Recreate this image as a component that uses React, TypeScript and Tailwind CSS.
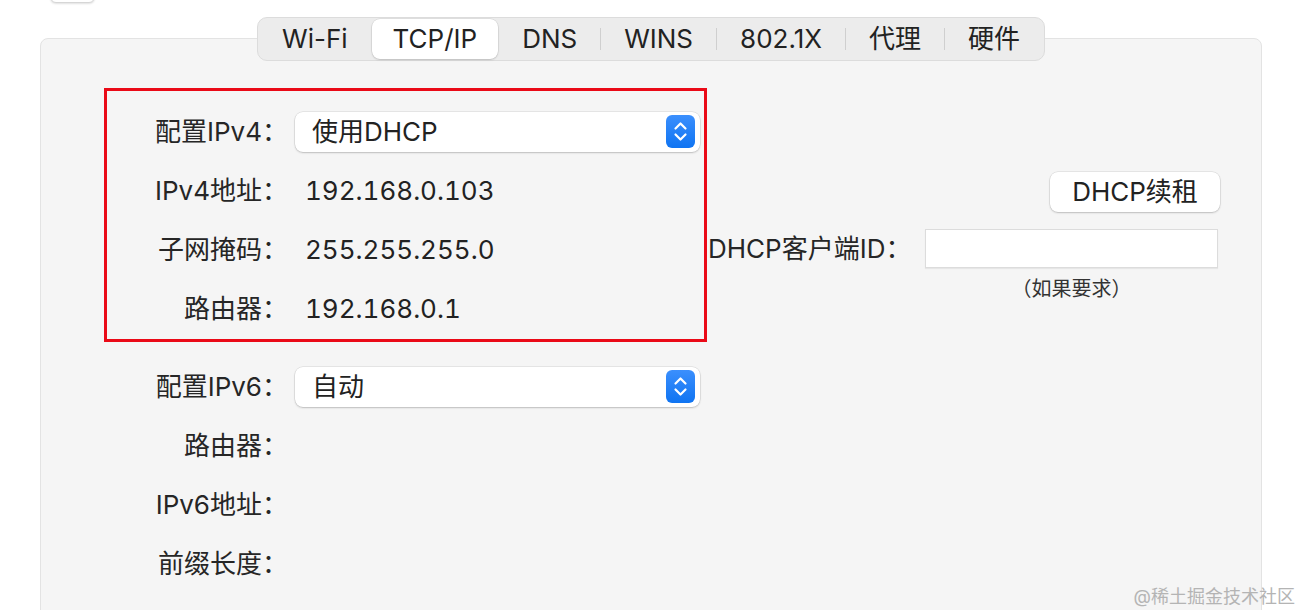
import React from "react";

const tabs = ["Wi-Fi", "TCP/IP", "DNS", "WINS", "802.1X", "代理", "硬件"];
const selected = 1;

function Stepper() {
  return (
    <svg width="29" height="33" viewBox="0 0 29 33" className="shrink-0">
      <defs>
        <linearGradient id="stepg" x1="0" y1="0" x2="0" y2="1">
          <stop offset="0" stopColor="#3b8ffd" />
          <stop offset="1" stopColor="#0f74f2" />
        </linearGradient>
      </defs>
      <rect x="0" y="0" width="29" height="33" rx="6" fill="url(#stepg)" />
      <path d="M9.5 13.5 L14.5 8.5 L19.5 13.5" fill="none" stroke="#fff" strokeWidth="2.2" strokeLinecap="round" strokeLinejoin="round" />
      <path d="M9.5 19.5 L14.5 24.5 L19.5 19.5" fill="none" stroke="#fff" strokeWidth="2.2" strokeLinecap="round" strokeLinejoin="round" />
    </svg>
  );
}

function Select({ value }: { value: string }) {
  return (
    <div className="flex h-[40px] w-[405px] items-center justify-between rounded-[8px] bg-white pl-[17px] pr-[5px] shadow-[0_0_0_0.5px_rgba(0,0,0,0.12),0_1px_2px_rgba(0,0,0,0.18)]">
      <span>{value}</span>
      <Stepper />
    </div>
  );
}

function Row({ label, children }: { label: string; children?: React.ReactNode }) {
  return (
    <div className="flex h-[59px] items-center gap-[7px]">
      <div className="w-[181px] shrink-0 text-right text-[#262626]">{label}</div>
      <div className="flex w-[405px] items-center">{children}</div>
    </div>
  );
}

function Value({ children }: { children: React.ReactNode }) {
  return <span className="pl-[10px] tabular-nums">{children}</span>;
}

export default function App() {
  return (
    <div className="relative h-[610px] w-[1302px] overflow-hidden bg-white font-['Inter','Noto_Sans_CJK_SC',sans-serif] text-[26px] leading-none text-[#222]">
      <div className="-mt-[17px] ml-[50px] h-[20px] w-[45px] rounded-[6px] border border-[#d6d6d6] bg-white shadow-[0_1px_2px_rgba(0,0,0,0.12)]" />
      <div className="mt-[14px] flex flex-col items-center">
        <div className="relative z-10 flex h-[44px] items-center rounded-[10px] border border-[#dcdcdc] bg-[#ececec] p-[1px]">
          {tabs.map((t, i) => (
            <React.Fragment key={t}>
              {i > 0 && (
                <div
                  className={
                    i === selected || i - 1 === selected
                      ? "h-[22px] w-[1px]"
                      : "h-[22px] w-[1px] bg-[#cfcfcf]"
                  }
                />
              )}
              <div
                className={
                  i === selected
                    ? "flex h-[40px] items-center rounded-[8px] bg-white px-[21px] shadow-[0_0_0_0.5px_rgba(0,0,0,0.1),0_1px_2px_rgba(0,0,0,0.15)]"
                    : "flex h-[40px] items-center px-[23px]"
                }
              >
                {t}
              </div>
            </React.Fragment>
          ))}
        </div>
        <div className="-mt-[23px] h-[600px] w-[1222px] rounded-[8px] border border-[#e3e3e3] bg-[#f5f5f5] pl-[63px] pr-[41px] pt-[49px]">
          <div className="flex">
            <div className="h-[254px] w-[603px] shrink-0 border-[3px] border-[#ea0a17] pt-[11px]">
              <Row label="配置IPv4：">
                <Select value="使用DHCP" />
              </Row>
              <Row label="IPv4地址：">
                <Value>192.168.0.103</Value>
              </Row>
              <Row label="子网掩码：">
                <Value>255.255.255.0</Value>
              </Row>
              <Row label="路由器：">
                <Value>192.168.0.1</Value>
              </Row>
            </div>
            <div className="flex flex-1 flex-col">
              <div className="mt-[84px] flex h-[40px] w-[170px] items-center justify-center self-end rounded-[8px] bg-white shadow-[0_0_0_0.5px_rgba(0,0,0,0.12),0_1px_2px_rgba(0,0,0,0.18)]">
                DHCP续租
              </div>
              <div className="mt-[17px] flex items-center justify-between pl-[1px] pr-[2px]">
                <span className="text-[#262626]">DHCP客户端ID：</span>
                <div className="h-[39px] w-[293px] border border-[#dcdcdc] bg-white shadow-[0_1px_1px_rgba(0,0,0,0.06)]" />
              </div>
              <div className="mr-[2px] mt-[11px] w-[293px] self-end text-center text-[20px] text-[#333]">
                （如果要求）
              </div>
            </div>
          </div>
          <div className="mt-[15px] pl-[3px]">
            <Row label="配置IPv6：">
              <Select value="自动" />
            </Row>
            <Row label="路由器：" />
            <Row label="IPv6地址：" />
            <Row label="前缀长度：" />
          </div>
        </div>
      </div>
      <div className="absolute bottom-[4px] right-[7px] text-[18px] text-[#b4b4b4]">
        @稀土掘金技术社区
      </div>
    </div>
  );
}
